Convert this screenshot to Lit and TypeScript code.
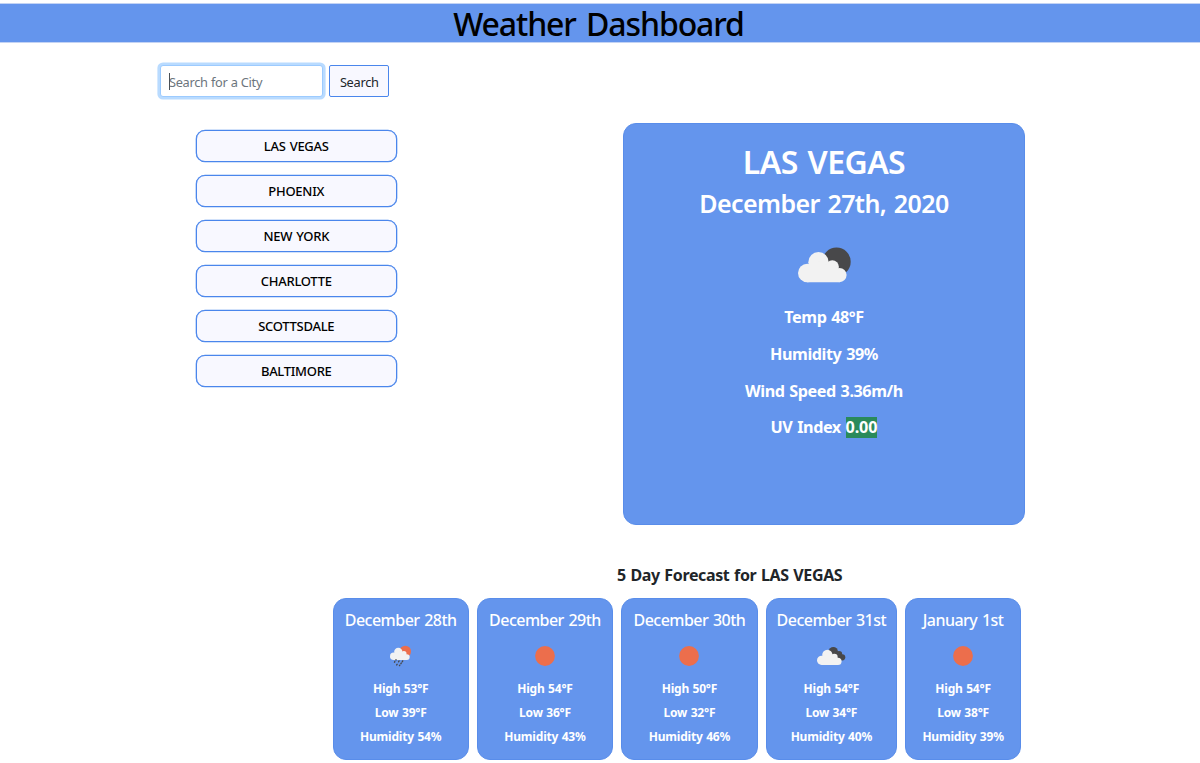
import { LitElement, html, svg, css } from "lit";
import { customElement, property, state } from "lit/decorators.js";

type Sky = "partly" | "rain" | "clear" | "broken";

interface Day {
  date: string;
  sky: Sky;
  high: number;
  low: number;
  humidity: number;
  width: number;
}

const cloud = svg`
  <circle cx="9.2" cy="26" r="9.2"></circle>
  <circle cx="20.5" cy="15.2" r="10.2"></circle>
  <circle cx="34.3" cy="19.8" r="6.6"></circle>
  <circle cx="41.5" cy="28.1" r="7.1"></circle>
  <path d="M9 22 L20 14 L34 20 L41 26 L41.5 35.2 H9 Z"></path>`;

@customElement("weather-icon")
export class WeatherIcon extends LitElement {
  static styles = css`
    :host { display: block; line-height: 0; }
    svg { display: block; overflow: visible; }
    .cloud { fill: #f2f2f2; }
    .dark { fill: #48484a; }
    .sun { fill: #ec6e4c; }
    .drops { stroke: #48484a; stroke-width: 1.4; stroke-linecap: round; }
  `;

  @property() sky: Sky = "clear";

  render() {
    switch (this.sky) {
      case "partly":
        return html`<svg width="54" height="36" viewBox="0 0 54 36">
          <circle class="dark" cx="38.5" cy="14.8" r="14.2"></circle>
          <g class="cloud">${cloud}</g>
        </svg>`;
      case "rain":
        return html`<svg width="32" height="24" viewBox="0 0 32 24">
          <circle class="sun" cx="20.3" cy="7.4" r="5.7"></circle>
          <g class="cloud" transform="translate(5 1.7) scale(0.405)">${cloud}</g>
          <g class="drops">
            <path d="M11 15.7v.3M9.8 17.6l-.3.6M14 17l-.4.8M17.7 16.9l-.4.8M12.1 20.3l-.4.6M16.3 19l-.4.7M14.7 21.2l-.2.4"></path>
          </g>
        </svg>`;
      case "broken":
        return html`<svg width="32" height="24" viewBox="0 0 32 24">
          <g class="dark">
            <circle cx="18.3" cy="7.6" r="4.6"></circle>
            <circle cx="24" cy="10.2" r="3.2"></circle>
            <circle cx="27.2" cy="13.3" r="3.1"></circle>
            <path d="M17 8L24 8L27 13L26 16H20Z"></path>
          </g>
          <g class="cloud" transform="translate(2 3.2) scale(0.505)">${cloud}</g>
        </svg>`;
      default:
        return html`<svg width="32" height="24" viewBox="0 0 32 24">
          <circle class="sun" cx="16" cy="12" r="9.9"></circle>
        </svg>`;
    }
  }
}

@customElement("app-root")
export class AppRoot extends LitElement {
  static styles = css`
    :host {
      display: block;
      height: 763px;
      overflow: hidden;
      background: #fff;
      color: #212529;
      font-family: "Noto Sans", "Open Sans", sans-serif;
      box-sizing: border-box;
      padding-top: 3px;
    }
    * { box-sizing: border-box; margin: 0; }
    .title {
      height: 40px;
      border: solid #c3d3f4;
      border-width: 1px 0;
      background: #6495ed;
      color: #000;
      text-align: center;
      font-size: 32px;
      font-weight: 500;
      line-height: 39px;
      letter-spacing: -1.1px;
      word-spacing: 3px;
      padding-right: 3px;
    }
    .search { display: flex; gap: 6px; padding: 22px 0 0 159.5px; }
    .field { position: relative; width: 163px; }
    .input {
      display: block;
      width: 163px;
      height: 32px;
      padding: 2px 9px 0 8.5px;
      border: 1px solid #9ccbff;
      border-radius: 3px;
      outline: none;
      box-shadow: 0 0 0 2.6px #b9dbff;
      background: #fff;
      font: 400 12.8px "Noto Sans", sans-serif;
      letter-spacing: -0.32px;
      word-spacing: 0.3px;
    }
    .input::placeholder { color: #6c757d; opacity: 1; }
    .caret { position: absolute; left: 9.5px; top: 8px; width: 1px; height: 17px; background: #495057; }
    .go {
      width: 60.5px;
      height: 32px;
      padding: 1px 0 0 1px;
      border: 1px solid #4a86ec;
      border-radius: 2px;
      background: #f8f8ff;
      color: #212529;
      font: 400 12.8px "Noto Sans", sans-serif;
      letter-spacing: -0.3px;
    }
    .main { display: flex; align-items: flex-start; padding: 26px 0 0 195.5px; }
    .cities { display: flex; flex-direction: column; gap: 13px; width: 201.5px; margin: 7px 226px 0 0; }
    .city {
      height: 32px;
      padding: 0;
      border: 1px solid #4a86ec;
      border-radius: 9px;
      background: #f8f8ff;
      box-shadow: 0 0 0 0.3px #4a86ec;
      color: #000;
      font: 500 13px/30px "Noto Sans", sans-serif;
      letter-spacing: -0.28px;
      word-spacing: 1px;
      text-align: center;
    }
    .current {
      width: 402px;
      height: 402px;
      border: 1px solid #598dea;
      border-radius: 13px;
      background: #6495ed;
      color: #fff;
      display: flex;
      flex-direction: column;
      align-items: center;
    }
    .name { margin-top: 18px; font-size: 32px; font-weight: 600; line-height: 39px; letter-spacing: -0.55px; word-spacing: 2px; }
    .today { margin-top: 6px; font-size: 25px; font-weight: 600; line-height: 32px; letter-spacing: -0.6px; word-spacing: 1.8px; }
    .now { margin: 28px 0 16.4px 1px; }
    .stat { font-size: 16.2px; font-weight: 700; line-height: 36.6px; letter-spacing: -0.44px; word-spacing: 1px; }
    .uv { display: inline-block; line-height: 21px; background: #2a8a5b; letter-spacing: -0.1px; }
    .heading {
      margin: 36.6px 0 0 617px;
      font-size: 16px;
      font-weight: 700;
      line-height: 26px;
      letter-spacing: -0.36px;
      word-spacing: 0.8px;
    }
    .days { display: flex; padding: 10.4px 0 0 332.5px; gap: 7.9px; }
    .day {
      flex: none;
      height: 162px;
      border: 1px solid #598dea;
      border-radius: 13px;
      background: #6495ed;
      color: #fff;
      display: flex;
      flex-direction: column;
      align-items: center;
      white-space: nowrap;
    }
    .date { margin-top: 9px; font-size: 16px; font-weight: 500; line-height: 24px; letter-spacing: -0.52px; word-spacing: 1px; }
    .sky { margin: 12px 0 9px; }
    .line { font-size: 12px; font-weight: 700; line-height: 24.2px; letter-spacing: -0.2px; word-spacing: 0.6px; }
  `;

  @state() private cities = ["LAS VEGAS", "PHOENIX", "NEW YORK", "CHARLOTTE", "SCOTTSDALE", "BALTIMORE"];

  @state() private days: Day[] = [
    { date: "December 28th", sky: "rain", high: 53, low: 39, humidity: 54, width: 136.4 },
    { date: "December 29th", sky: "clear", high: 54, low: 36, humidity: 43, width: 136.4 },
    { date: "December 30th", sky: "clear", high: 50, low: 32, humidity: 46, width: 136.7 },
    { date: "December 31st", sky: "broken", high: 54, low: 34, humidity: 40, width: 131.4 },
    { date: "January 1st", sky: "clear", high: 54, low: 38, humidity: 39, width: 116.3 },
  ];

  render() {
    return html`
      <h1 class="title">Weather Dashboard</h1>
      <div class="search">
        <div class="field">
          <input class="input" type="text" placeholder="Search for a City" />
          <span class="caret"></span>
        </div>
        <button class="go">Search</button>
      </div>
      <div class="main">
        <div class="cities">${this.cities.map((c) => html`<button class="city">${c}</button>`)}</div>
        <section class="current">
          <h2 class="name">LAS VEGAS</h2>
          <h3 class="today">December 27th, 2020</h3>
          <weather-icon class="now" sky="partly"></weather-icon>
          <p class="stat">Temp 48°F</p>
          <p class="stat">Humidity 39%</p>
          <p class="stat">Wind Speed 3.36m/h</p>
          <p class="stat">UV Index <span class="uv">0.00</span></p>
        </section>
      </div>
      <h4 class="heading">5 Day Forecast for LAS VEGAS</h4>
      <div class="days">
        ${this.days.map(
          (d) => html`<article class="day" style="width:${d.width}px">
            <h5 class="date">${d.date}</h5>
            <weather-icon class="sky" sky=${d.sky}></weather-icon>
            <p class="line">High ${d.high}°F</p>
            <p class="line">Low ${d.low}°F</p>
            <p class="line">Humidity ${d.humidity}%</p>
          </article>`
        )}
      </div>
    `;
  }
}
